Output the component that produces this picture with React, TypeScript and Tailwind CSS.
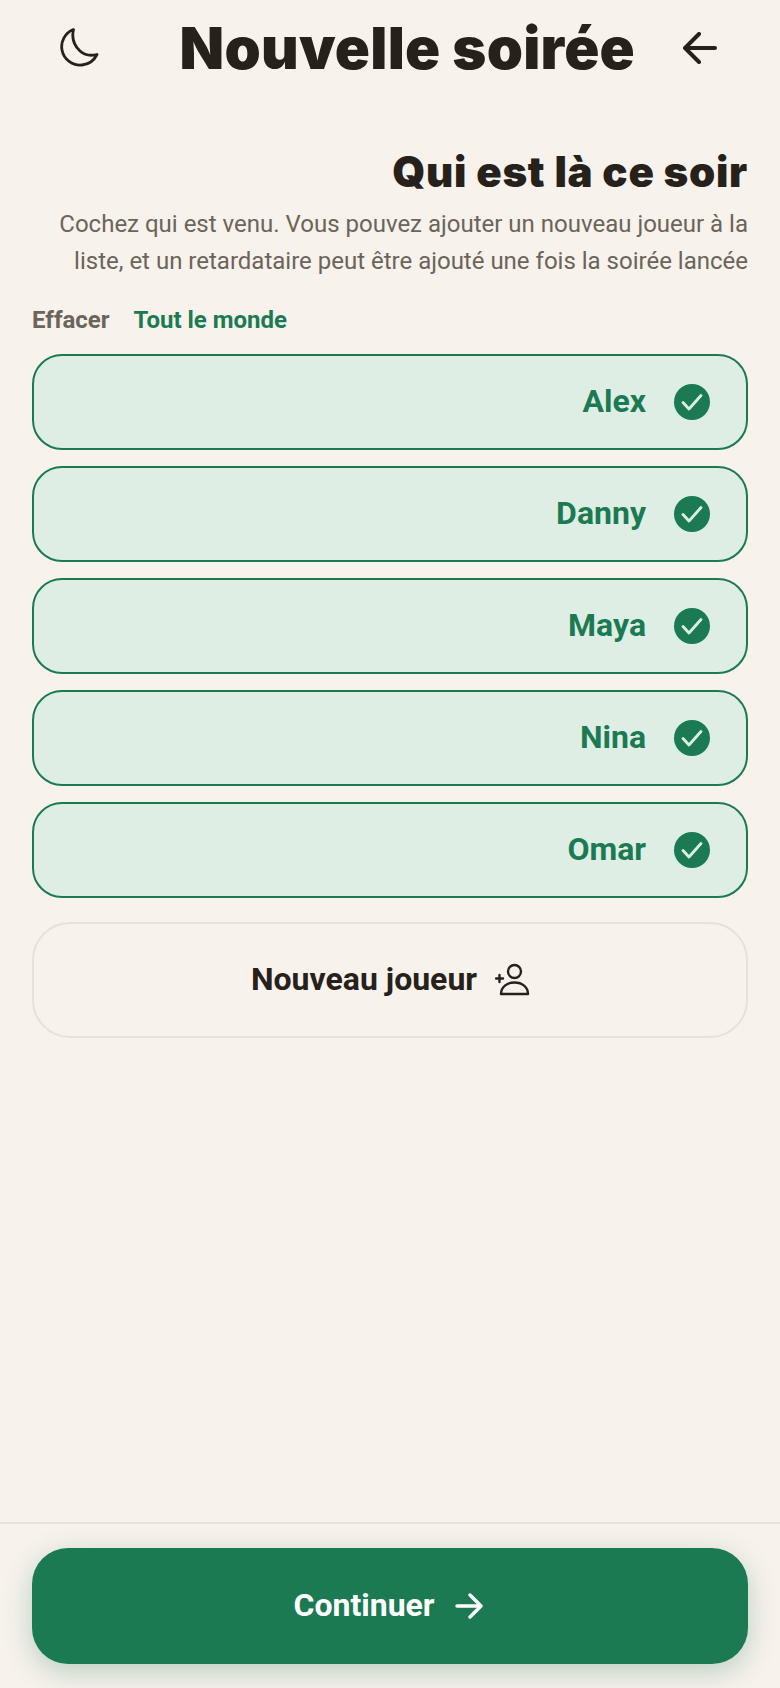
import React from "react";

const players = ["Alex", "Danny", "Maya", "Nina", "Omar"];

function Check() {
  return (
    <svg width="36" height="36" viewBox="0 0 36 36" className="shrink-0">
      <circle cx="18" cy="18" r="18" fill="#1c7a53" />
      <path d="M9 18.500l6 6.500L27 11.500" fill="none" stroke="#deeee4" strokeWidth="2.800" strokeLinecap="round" strokeLinejoin="round" />
    </svg>
  );
}

export default function App() {
  return (
    <div className="flex flex-col h-[1688px] w-[780px] bg-[#f7f2ec] font-['Roboto',sans-serif] text-[#26211b]">
      <header className="flex items-center h-[96px] pl-[60px] pr-[63px] justify-between">
        <svg width="40" height="40" viewBox="0 0 40 40" fill="none" stroke="#26211b" strokeWidth="2.800" strokeLinejoin="round" strokeLinecap="round">
          <path d="M13.500 1.500C4.500 5 .5 14 2 22c1.800 9.500 10.500 16 20 15 6.500-.6 12-4.500 15-10.500-6 1.500-12.500.5-17-3.500C14 17.500 11.500 10 13.500 1.500Z" />
        </svg>
        <div className="flex items-center gap-[48px]">
          <h1 className="font-['Inter',sans-serif] font-black text-[58px] leading-[72px] tracking-[0.25px]">Nouvelle soirée</h1>
          <svg width="34" height="32" viewBox="0 0 34 32" fill="none" stroke="#26211b" strokeWidth="4" strokeLinecap="round" strokeLinejoin="round">
            <path d="M32 16H2M16 2L2 16l14 14" />
          </svg>
        </div>
      </header>

      <main className="flex-1 flex flex-col px-[32px] pt-[50px]">
        <h2 className="text-right font-['Inter',sans-serif] font-black text-[42px] leading-[52px] tracking-[0.7px]">Qui est là ce soir</h2>
        <p className="mt-[8px] text-right text-[24px] leading-[37px] text-[#6b645a]">
          Cochez qui est venu. Vous pouvez ajouter un nouveau joueur à la liste, et un retardataire peut être ajouté une fois la soirée lancée
        </p>
        <div className="mt-[22px] flex gap-[24px] text-[24px] leading-[36px] font-bold">
          <span className="text-[#6b645a]">Effacer</span>
          <span className="text-[#1c7a53]">Tout le monde</span>
        </div>
        <ul className="mt-[16px] flex flex-col gap-[16px]">
          {players.map((p) => (
            <li key={p} className="flex items-center justify-end gap-[28px] h-[96px] pr-[36px] rounded-[30px] border-2 border-[#1c7a53] bg-[#deeee4] text-[#1c7a53]">
              <span className="font-bold text-[32px] leading-[40px] pb-[2px]">{p}</span>
              <Check />
            </li>
          ))}
        </ul>
        <button className="mt-[24px] flex items-center justify-center gap-[18px] h-[116px] pl-[2px] rounded-[38px] border-2 border-[#e9e1d6] text-[32px] font-bold">
          <span className="pb-[2px]">Nouveau joueur</span>
          <svg width="36" height="34" viewBox="0 0 36 34" fill="none" stroke="#26211b" strokeWidth="2.400" strokeLinecap="round" strokeLinejoin="round">
            <circle cx="19.500" cy="8.500" r="6.500" />
            <path d="M6 31c0-7 6-11.500 13.500-11.500S33 24 33 31ZM1 15.500h7M4.500 12v7" />
          </svg>
        </button>
      </main>

      <footer className="border-t-2 border-[#e9e1d6] px-[32px] pt-[24px] pb-[24px]">
        <button className="flex items-center justify-center gap-[20px] w-full h-[116px] pr-[4px] rounded-[36px] bg-[#1c7a53] text-white text-[32px] font-bold shadow-[0_8px_28px_rgba(28,122,83,0.28)]">
          <span className="pb-[2px]">Continuer</span>
          <svg width="28" height="26" viewBox="0 0 28 26" fill="none" stroke="#ffffff" strokeWidth="3.400" strokeLinecap="round" strokeLinejoin="round">
            <path d="M2 13h24M15 2l11 11-11 11" />
          </svg>
        </button>
      </footer>
    </div>
  );
}
